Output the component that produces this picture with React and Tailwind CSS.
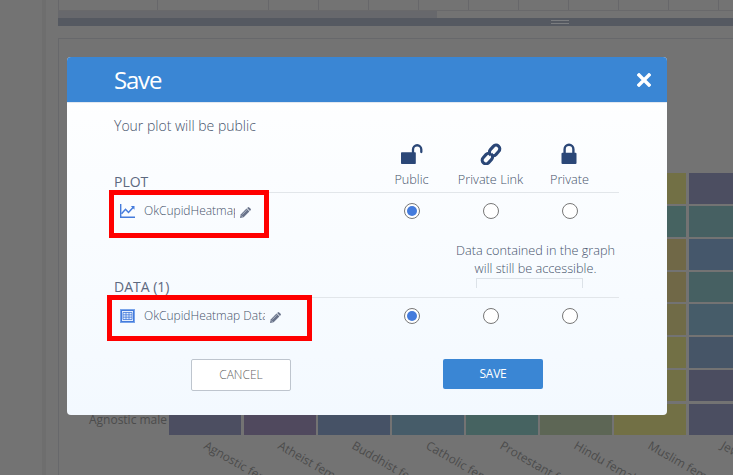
import React from 'react';

const tableColumns = [99, 111, 50, 50, 50, 50, 50, 50, 50, 50, 50, 50];

const columns = [
  { x: 169, w: 72, color: '#4c4e61' },
  { x: 244, w: 72, color: '#50495e' },
  { x: 318, w: 72, color: '#465266' },
  { x: 392, w: 72, color: '#465c69' },
  { x: 466, w: 72, color: '#466361' },
  { x: 540, w: 72, color: '#5d6655' },
  { x: 614, w: 72, color: '#727045' },
  { x: 689, w: 60, color: '#4b4e61' },
];

const rows = [
  { y: 173, h: 31, left: '#727045', right: '#4c4e61' },
  { y: 206, h: 31, left: '#466361', right: '#466062' },
  { y: 239, h: 31, left: '#706847', right: '#45576b' },
  { y: 272, h: 30, left: '#706847', right: '#466062' },
  { y: 304, h: 31, left: '#706b47', right: '#465c69' },
  { y: 337, h: 31, left: '#727045', right: '#465567' },
  { y: 370, h: 31, left: '#727045', right: '#4b4d60' },
];

const labels = [
  ['Agnostic female', 203, 448],
  ['Atheist female', 277, 448],
  ['Buddhist female', 351, 448],
  ['Catholic female', 425, 448],
  ['Protestant female', 499, 448],
  ['Hindu female', 573, 448],
  ['Muslim female', 647, 448],
  ['Jewish female', 720, 448],
];

function Heatmap() {
  return (
    <svg className="block h-[436px] w-[674px]" viewBox="59 39 674 436" fontFamily="'Open Sans', sans-serif" fontSize="12" fill="#4c4c4c">
      {rows.map((r) => (
        <g key={r.y}>
          <rect x="614" y={r.y} width="72" height={r.h} fill={r.left} />
          <rect x="689" y={r.y} width="60" height={r.h} fill={r.right} />
        </g>
      ))}
      {columns.map((c) => (
        <rect key={c.x} x={c.x} y="404" width={c.w} height="31" fill={c.color} />
      ))}
      <text x="167" y="424" textAnchor="end" textLength="78">Agnostic male</text>
      {labels.map(([t, x, y]) => (
        <text key={t} transform={`translate(${x} ${y}) rotate(30)`}>{t}</text>
      ))}
    </svg>
  );
}

function OpenLock() {
  return (
    <svg className="h-[22px] w-[22px]" viewBox="0 0 22 22">
      <rect x="0" y="9.3" width="14.8" height="11.7" rx=".8" fill="#2b4777" />
      <path d="M12 9.8V6.4a4.1 4.1 0 0 1 8.3 0V9" fill="none" stroke="#2b4777" strokeWidth="2.3" strokeLinecap="round" />
    </svg>
  );
}

function LinkIcon() {
  return (
    <svg className="h-[22px] w-[22px]" viewBox="0 0 22 22" fill="none" stroke="#2b4777" strokeWidth="3.1" strokeLinecap="butt">
      <g transform="rotate(-48 11 11.5)">
        <path d="M10.6 9.3a3.7 3.7 0 0 0-2.8-1.5H3.4a3.7 3.7 0 0 0 0 7.4h4.4a3.7 3.7 0 0 0 3.7-3.9" />
        <path d="M11.4 13.7a3.7 3.7 0 0 0 2.8 1.5h4.4a3.7 3.7 0 0 0 0-7.4h-4.4a3.7 3.7 0 0 0-3.7 3.9" />
      </g>
    </svg>
  );
}

function ClosedLock() {
  return (
    <svg className="h-[22px] w-[17px]" viewBox="0 0 17 22">
      <rect x=".5" y="9.8" width="15" height="11.2" rx="1" fill="#2b4777" />
      <path d="M3.6 10.5V6.2a4.4 4.4 0 0 1 8.8 0v4.3" fill="none" stroke="#2b4777" strokeWidth="2.4" />
    </svg>
  );
}

function Pencil() {
  return (
    <svg className="ml-[5px] mt-[3px] h-[11px] w-[11px] shrink-0" viewBox="0 0 11 11" fill="#69738a">
      <path d="M0 11l.7-3.6L6.5 1.6l2.9 2.9-5.8 5.8z" />
      <path d="M7.1 1 7.8.4a1 1 0 0 1 1.4 0l1.4 1.4a1 1 0 0 1 0 1.4l-.7.7z" />
      <path d="M1.1 8.4 2.6 9.9M2.4 7.4 6.8 3" stroke="#dfe5ee" strokeWidth=".6" />
    </svg>
  );
}

function PlotIcon() {
  return (
    <svg className="h-[14px] w-[15px] shrink-0" viewBox="0 0 15 14" fill="none" stroke="#447bdc">
      <path d="M.7 0v13.2H15" strokeWidth="1.4" />
      <path d="M1.5 9.8 5.5 5.3l3 3.2 5-5.5" strokeWidth="1.5" />
      <path d="M10.8 2h3.7v3.7z" fill="#447bdc" stroke="none" />
    </svg>
  );
}

function GridIcon() {
  return (
    <svg className="h-[14px] w-[15px] shrink-0" viewBox="0 0 15 14">
      <rect width="15" height="14" fill="#79a4ea" />
      <rect x="1" y="1" width="13" height="12" fill="#447bdc" />
      <rect x="2" y="2" width="11" height="10" fill="#e6effc" />
      <path d="M3 3.5h9v7H3zM3 5.8h9M3 8.2h9M6 3.5v7M9 3.5v7" fill="none" stroke="#447bdc" strokeWidth=".8" />
    </svg>
  );
}

function Radio({ checked }) {
  return (
    <div className="flex h-4 w-4 items-center justify-center rounded-full border border-[#777] bg-white">
      {checked && <div className="h-[10px] w-[10px] rounded-full bg-[#447bdc]" />}
    </div>
  );
}

function Radios() {
  return (
    <div className="flex gap-[63px]">
      <Radio checked />
      <Radio />
      <Radio />
    </div>
  );
}

function Option({ icon, label }) {
  return (
    <div className="flex w-[79px] flex-col items-center">
      <div className="flex h-[22px] items-center">{icon}</div>
      <span className="mt-[5px] whitespace-nowrap text-[12.7px] leading-[18px]">{label}</span>
    </div>
  );
}

function SaveDialog() {
  return (
    <div className="flex h-[358px] w-[600px] flex-col overflow-hidden rounded-[4px] bg-linear-to-b from-white to-[#f3f9ff] font-light text-[#46536b]">
      <div className="flex h-[45px] shrink-0 items-center justify-between bg-[#3a86d4] pl-[47px] pr-4 text-white">
        <h1 className="text-[24px] font-normal leading-[45px] tracking-[-1.2px]">Save</h1>
        <svg className="h-[14px] w-[14px]" viewBox="0 0 14 14">
          <path d="m2 2 10 10M12 2 2 12" stroke="white" strokeWidth="3.4" strokeLinecap="square" />
        </svg>
      </div>
      <div className="border-t border-[#e2e8f0] pl-[47px] pr-12">
        <p className="mt-[13px] text-[14px] leading-5">Your plot will be public</p>
        <div className="mt-[7px] flex h-[50px] justify-between border-b border-[#e2e6ea]">
          <h2 className="mt-[29px] text-[14px] font-normal leading-5 text-[#5d6980]">PLOT</h2>
          <div className="flex pr-[10px]">
            <Option icon={<OpenLock />} label="Public" />
            <Option icon={<LinkIcon />} label="Private Link" />
            <Option icon={<ClosedLock />} label="Private" />
          </div>
        </div>
        <div className="flex h-[36px] items-center justify-between pl-[6px] pr-[41px]">
          <div className="flex items-center">
            <PlotIcon />
            <span className="ml-[9px] w-[91px] overflow-hidden whitespace-nowrap text-[12px] leading-5">OkCupidHeatmap</span>
            <Pencil />
          </div>
          <Radios />
        </div>
        <div className="flex h-[69px] justify-between border-b border-[#e2e6ea]">
          <h2 className="mt-[48px] text-[14px] font-normal leading-5 text-[#5d6980]">DATA (1)</h2>
          <div className="mt-[12px] flex flex-col pr-[4px]">
            <p className="whitespace-nowrap text-center text-[12.7px] leading-[18px]">Data contained in the graph<br />will still be accessible.</p>
            <div className="ml-[20px] mt-px h-[10px] w-[107px] border border-b-0 border-[#dce2e8]" />
          </div>
        </div>
        <div className="flex h-[36px] items-center justify-between pl-[6px] pr-[41px]">
          <div className="flex items-center">
            <GridIcon />
            <span className="ml-[9px] w-[121px] overflow-hidden whitespace-nowrap text-[12px] leading-5">OkCupidHeatmap Data</span>
            <Pencil />
          </div>
          <Radios />
        </div>
        <div className="mt-[25px] flex items-start justify-between pl-[77px] pr-[76px]">
          <button className="h-8 w-[100px] rounded-[2px] border border-[#bec5ce] bg-white text-[12px] font-light text-[#666]">CANCEL</button>
          <button className="h-[30px] w-[100px] rounded-[2px] bg-[#3a86d4] text-[12px] font-normal tracking-[-0.3px] text-white">SAVE</button>
        </div>
      </div>
    </div>
  );
}

export default function App() {
  return (
    <div className="relative flex h-[475px] w-[733px] overflow-hidden bg-[#737373] font-['Open_Sans',sans-serif]">
      <div className="h-full w-[46px] shrink-0 border-r-4 border-[#6e6e6e]" />
      <div className="ml-[12px] flex w-[675px] shrink-0 flex-col">
        <div className="flex h-[11px] shrink-0 overflow-hidden border-b border-[#69696b]">
          {tableColumns.map((w, i) => (
            <div key={i} className="shrink-0 border-l border-[#67676a]" style={{ width: w }} />
          ))}
        </div>
        <div className="h-[7px] w-[379px] shrink-0 bg-[#67686c]" />
        <div className="flex h-2 shrink-0 justify-center bg-[#555961] pl-[329px] pt-[2px]">
          <div className="h-1 w-[18px] border-y border-[#7b7d80]" />
        </div>
        <div className="mt-3 shrink-0 border-l border-t border-[#67686b]">
          <Heatmap />
        </div>
      </div>
      <div className="absolute left-[67px] top-[57px]">
        <SaveDialog />
      </div>
      <div className="absolute left-[109px] top-[190px] h-[48px] w-[160px] border-5 border-[#ff0000]" />
      <div className="absolute left-[107px] top-[295px] h-[46px] w-[205px] border-5 border-[#ff0000]" />
    </div>
  );
}
